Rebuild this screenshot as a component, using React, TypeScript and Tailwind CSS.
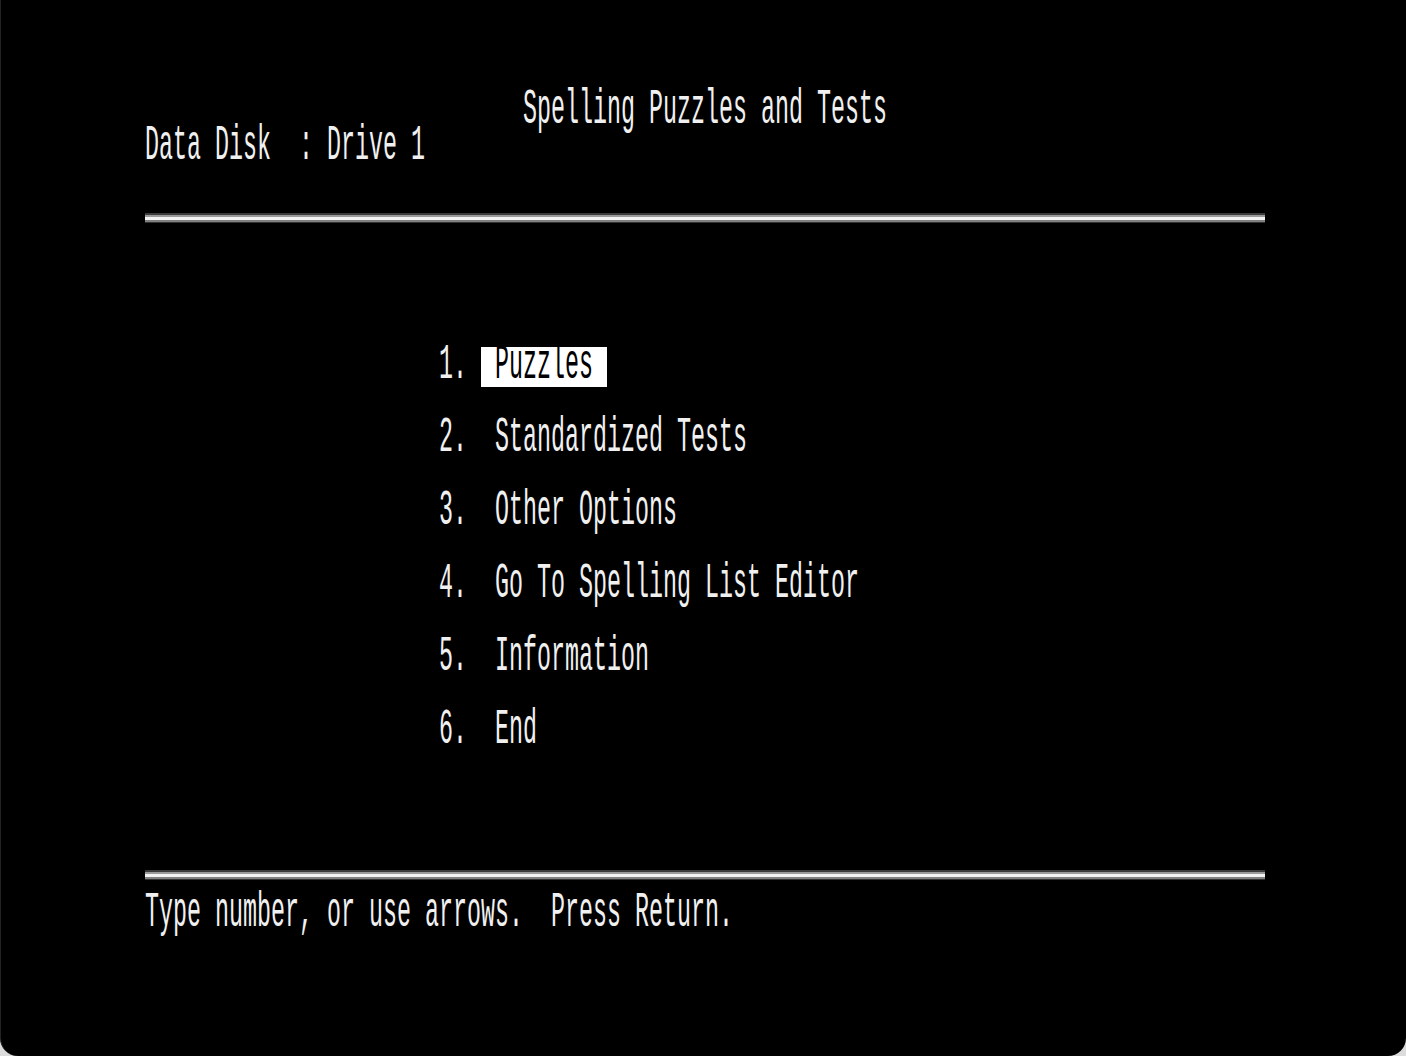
import React from "react";

const Txt = ({ children }: { children: React.ReactNode }) => (
  <span className="inline-block origin-center scale-y-[2.15]">{children}</span>
);

const Row = ({ children }: { children?: React.ReactNode }) => (
  <div className="flex h-[36.5px] items-center whitespace-pre">{children}</div>
);

const Rule = () => (
  <div className="flex h-[36.5px] items-center pb-[6px]">
    <div className="flex w-[1120px] flex-col">
      <div className="h-[2px] bg-[#3a3a3a]" />
      <div className="h-[2px] bg-[#9a9a9a]" />
      <div className="h-[3px] bg-[#f2f2f2]" />
      <div className="h-[2px] bg-[#808080]" />
      <div className="h-[1px] bg-[#333333]" />
    </div>
  </div>
);

const menu = [
  "Standardized Tests",
  "Other Options",
  "Go To Spelling List Editor",
  "Information",
  "End",
];

export default function App() {
  return (
    <div className="h-[1056px] w-[1406px] bg-[#dcdcdc]">
      <div
        className="h-full w-full rounded-b-[18px] border-l border-[#222] bg-black pl-[144px] pt-[93px] text-[23.33px] leading-none text-[#f0f0f0]"
        style={{ fontFamily: '"Liberation Mono", "DejaVu Sans Mono", monospace' }}
      >
        <Row>
          <Txt>{" ".repeat(27) + "Spelling Puzzles and Tests"}</Txt>
        </Row>
        <Row>
          <Txt>Data Disk  : Drive 1</Txt>
        </Row>
        <Row />
        <Rule />
        <Row />
        <Row />
        <Row />
        <Row>
          <Txt>{" ".repeat(21) + "1. "}</Txt>
          <span className="inline-flex h-[40px] items-center bg-white text-black">
            <Txt> Puzzles </Txt>
          </span>
        </Row>
        {menu.map((m, i) => (
          <React.Fragment key={m}>
            <Row />
            <Row>
              <Txt>{" ".repeat(21) + `${i + 2}.  ` + m}</Txt>
            </Row>
          </React.Fragment>
        ))}
        <Row />
        <Row />
        <Row />
        <Rule />
        <Row>
          <Txt>Type number, or use arrows.  Press Return.</Txt>
        </Row>
      </div>
    </div>
  );
}
